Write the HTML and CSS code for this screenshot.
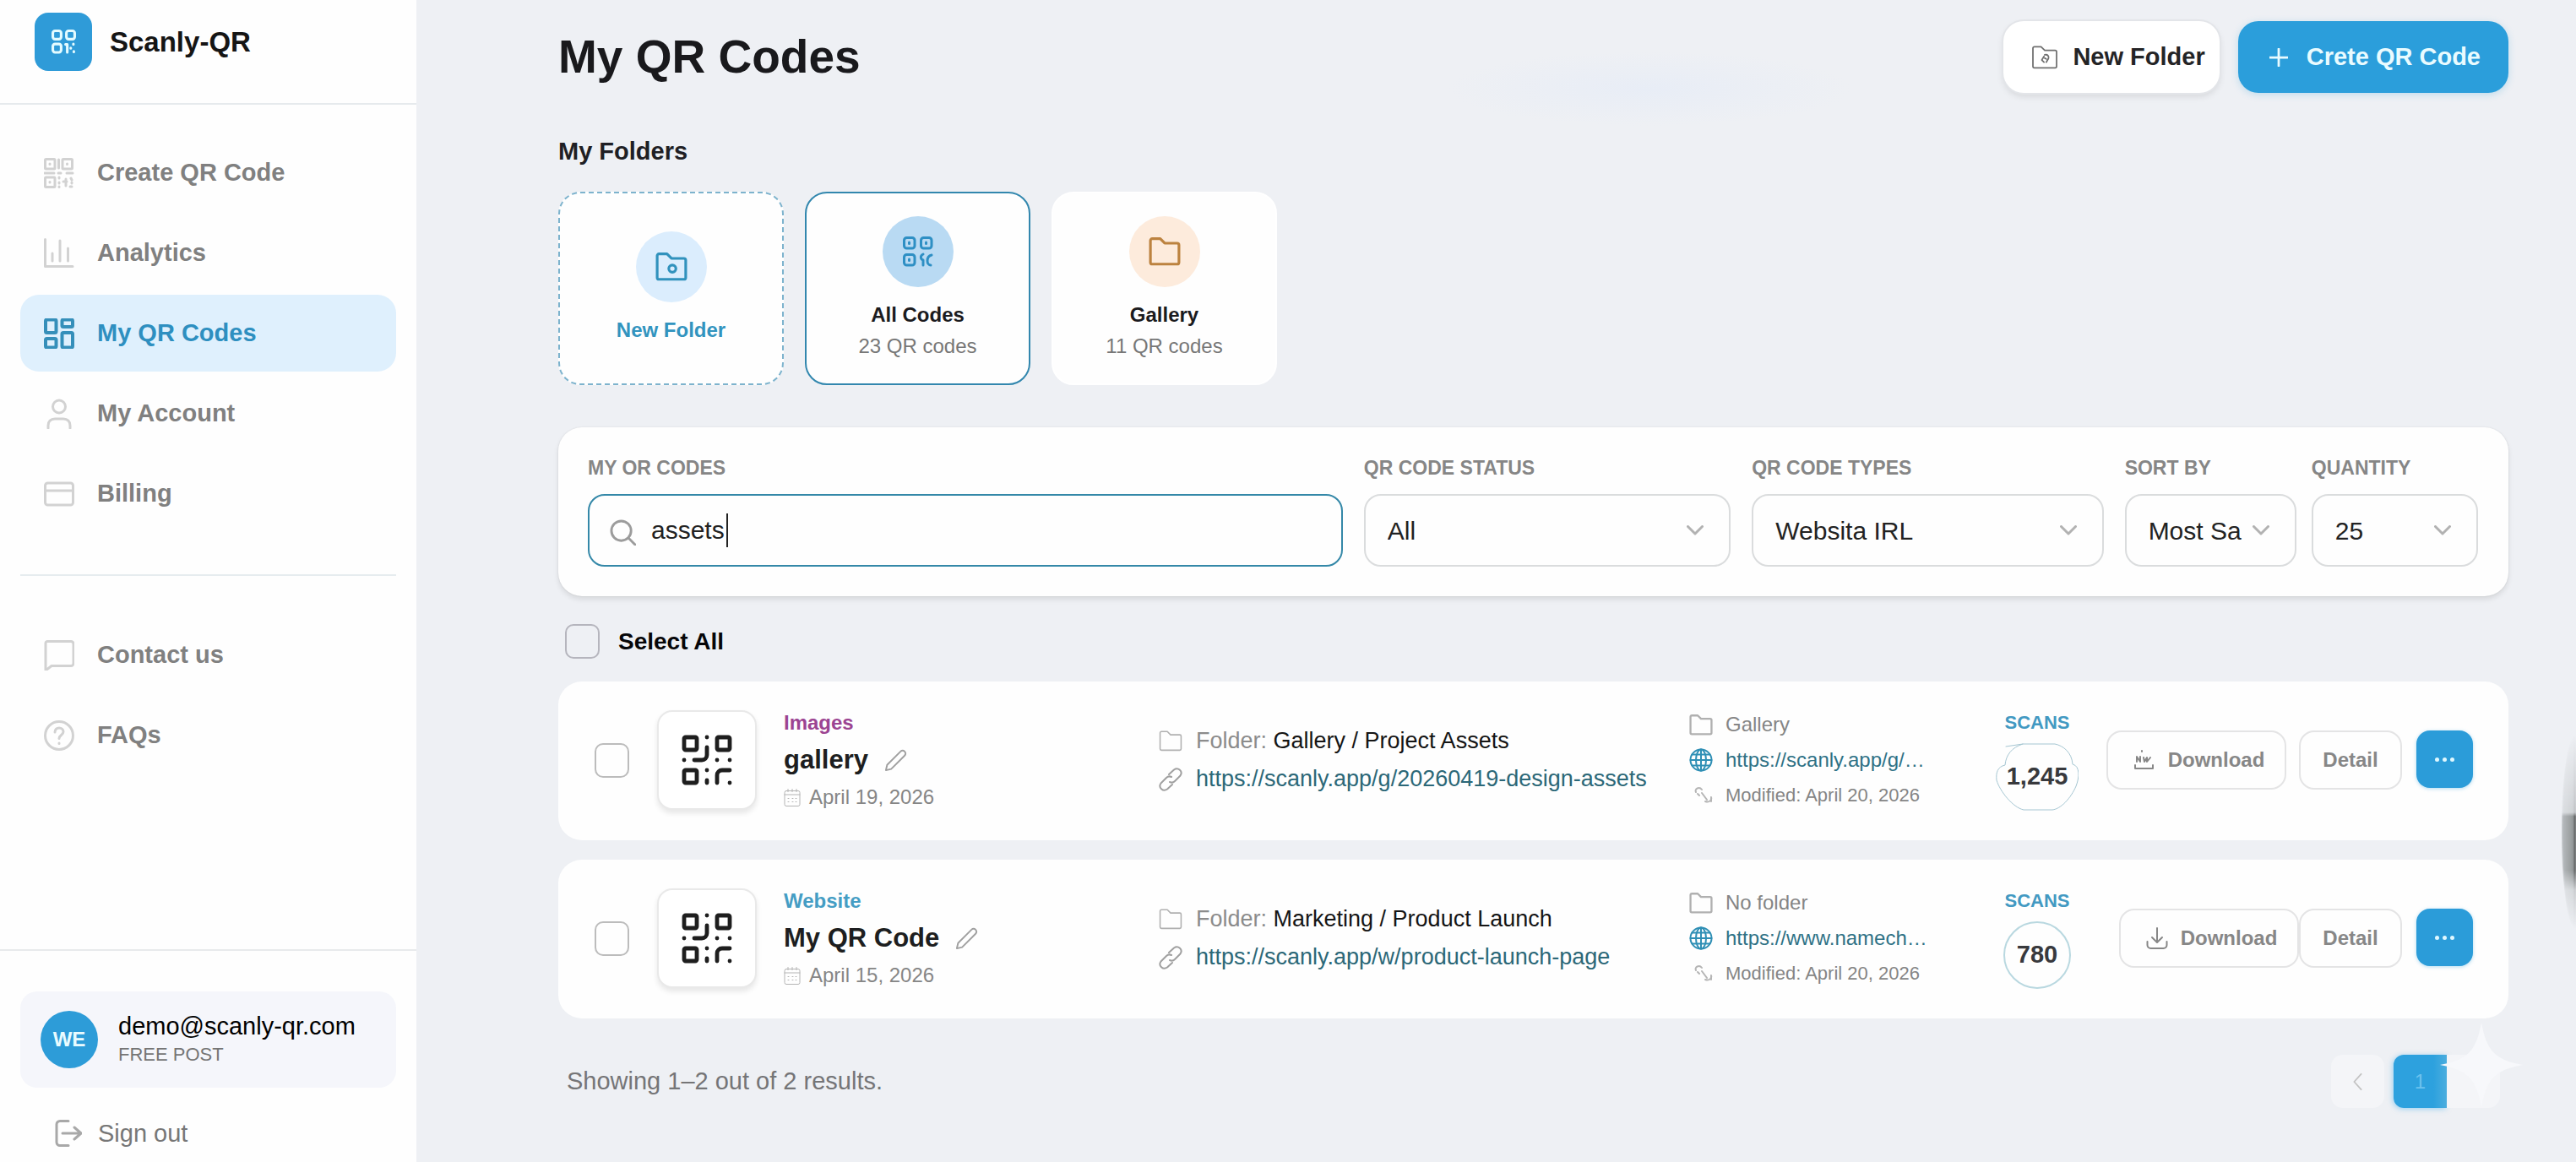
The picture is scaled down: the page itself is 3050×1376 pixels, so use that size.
FILE: index.html
```html
<!DOCTYPE html>
<html lang="en">
<head>
<meta charset="utf-8">
<meta name="viewport" content="width=device-width, initial-scale=1">
<title>My QR Codes – Scanly-QR</title>
<link rel="stylesheet" href="styles.css">
</head>
<body>
<svg class="sprite" aria-hidden="true">
  <symbol id="i-qr" viewBox="0 0 24 24"><rect x="3" y="3" width="5" height="5" rx=".6"/><rect x="16" y="3" width="5" height="5" rx=".6"/><rect x="3" y="16" width="5" height="5" rx=".6"/><path d="M21 16h-3a2 2 0 0 0-2 2v3M21 21v.01M12 7v3a2 2 0 0 1-2 2H7M3 12h.01M12 3h.01M12 16v.01M16 12h.01M21 12v.01M12 21v-1"/></symbol>
  <symbol id="i-logo" viewBox="0 0 28 28"><rect x="1.500" y="1.500" width="9.500" height="9.500" rx="2.500"/><rect x="17" y="1.500" width="9.500" height="9.500" rx="2.500"/><rect x="1.500" y="16.500" width="9.500" height="9.500" rx="2.500"/><path d="M16 17h2v9M25 16.500v.5M22 21v.5M25.500 25v.5"/></symbol>
  <symbol id="i-scan" viewBox="0 0 36 36"><rect x="1.500" y="1.500" width="11.500" height="11.500" rx="1"/><rect x="22" y="1.500" width="11.500" height="11.500" rx="1"/><rect x="1.500" y="23" width="11.500" height="11.500" rx="1"/><path d="M7 7v.5M27.500 7v.5M7 28.500v.5M17.500 2v10M1 18h11M17 18h3M27 18h7M18 23v1M18 29v1M18 34v.5M23 28h4M26 25v8M32 24l1 2M33 29v1M31 34h2"/></symbol>
  <symbol id="i-chart" viewBox="0 0 36 36"><path d="M1.500 1.500v32H34M10 18v9M19 3v24M28.500 12v15"/></symbol>
  <symbol id="i-dash" viewBox="0 0 36 36"><rect x="2" y="1.500" width="12.500" height="15.500" rx="1.500"/><rect x="21.500" y="1.500" width="12.500" height="8.500" rx="1.500"/><rect x="2" y="24" width="12.500" height="10.500" rx="1.500"/><rect x="21.500" y="17" width="12.500" height="17.500" rx="1.500"/></symbol>
  <symbol id="i-user" viewBox="0 0 36 36"><circle cx="18" cy="9.500" r="7.500"/><path d="M5 35v-3c0-5 3-8 8-8h10c5 0 8 3 8 8v3"/></symbol>
  <symbol id="i-card" viewBox="0 0 36 36"><rect x="1.500" y="5" width="33" height="26" rx="3"/><path d="M1.500 14h33"/></symbol>
  <symbol id="i-chat" viewBox="0 0 36 36"><path d="M4 1.500h28a3 3 0 0 1 3 3v23a3 3 0 0 1-3 3H9l-7 5.500V4a2.500 2.500 0 0 1 2-2.500z"/></symbol>
  <symbol id="i-help" viewBox="0 0 36 36"><circle cx="18" cy="18" r="16.500"/><path d="M13 14c0-7 10-6.500 10-.5 0 4-5 4-5 8M18 27v.5"/></symbol>
  <symbol id="i-out" viewBox="0 0 32 32"><path d="M16 1.500H6a4 4 0 0 0-4 4v21a4 4 0 0 0 4 4h10M9 16h21M23 9l8 7-8 7"/></symbol>
  <symbol id="i-folder" viewBox="0 0 36 32"><path d="M2 3.500A2 2 0 0 1 4 1.500h9l5 5h14a2 2 0 0 1 2 2V28a2 2 0 0 1-2 2H4a2 2 0 0 1-2-2z"/></symbol>
  <symbol id="i-folder-o" viewBox="0 0 36 32"><path d="M2 3.500A2 2 0 0 1 4 1.500h9l5 5h14a2 2 0 0 1 2 2V28a2 2 0 0 1-2 2H4a2 2 0 0 1-2-2z"/><circle cx="19" cy="18" r="4"/></symbol>
  <symbol id="i-folder-link" viewBox="0 0 36 32"><path d="M2 3.500A2 2 0 0 1 4 1.500h9l5 5h14a2 2 0 0 1 2 2V28a2 2 0 0 1-2 2H4a2 2 0 0 1-2-2z"/><path d="M17 22.500l-3-3 3-5M18 12.500c4-1 6 2 5 5l-3 5M18 17l2 1"/></symbol>
  <symbol id="i-all" viewBox="0 0 36 36"><rect x="1.500" y="1.500" width="12.500" height="12.500" rx="3"/><rect x="21.500" y="1.500" width="12.500" height="12.500" rx="3"/><rect x="1.500" y="21.500" width="12.500" height="12.500" rx="3"/><path d="M7.500 7v1.500M27.500 7v1.500M7.500 27v1.500M24 21c-4 2-3 6 0 7v6M34 22c-5 1-5 5-5 7 0 3 2 5 4 5"/></symbol>
  <symbol id="i-plus" viewBox="0 0 24 24"><path d="M12 1v22M1 12h22"/></symbol>
  <symbol id="i-search" viewBox="0 0 32 32"><circle cx="14" cy="14" r="12"/><path d="M23 23l8 8"/></symbol>
  <symbol id="i-down" viewBox="0 0 20 12"><path d="M1.500 1.500L10 10l8.500-8.500"/></symbol>
  <symbol id="i-pen" viewBox="0 0 28 28"><path d="M2 26l1.500-6.500L20 3c1.500-1.500 3.500-1.500 5 0s1.500 3.500 0 5L8.500 24.500z"/></symbol>
  <symbol id="i-cal" viewBox="0 0 20 22"><rect x="1" y="3" width="18" height="18" rx="2"/><path d="M1 7.500h18M5 1v3M10 1v3M15 1v3M5 12h1M10 12h1M14 12h1M5 16h1M10 16h1M14 16h1"/></symbol>
  <symbol id="i-link" viewBox="0 0 28 28"><path d="M12 8l6-5.500c5-3.500 11 2 7.500 7L19 16c-2 2-4 2-6 1M16 20l-6 5.500c-5 3.500-11-2-7.500-7L9 12c2-2 4-2 6-1"/></symbol>
  <symbol id="i-globe" viewBox="0 0 28 28"><circle cx="14" cy="14" r="12.500"/><ellipse cx="14" cy="14" rx="6" ry="12.500"/><path d="M14 1.500v25M1.500 14h25M3.500 7.500h21M3.500 20.500h21"/></symbol>
  <symbol id="i-mod" viewBox="0 0 22 22"><path d="M2 7c-2-4 4-7 7-3M4 9l2 2M9 8l6 8M20 13c1 3-2 7-7 5M20 18v-4"/></symbol>
  <symbol id="i-save" viewBox="0 0 26 26"><path d="M13 1v16M7 12l6 6 6-6M1.500 17v4a4 4 0 0 0 4 4h15a4 4 0 0 0 4-4v-4"/></symbol>
  <symbol id="i-save-alt" viewBox="0 0 26 26"><path d="M4 15V9l4 6V9M10 2v1M12 10l1 5 3-5v5l4-5M2 19v4h21v-4"/></symbol>
  <symbol id="i-prev" viewBox="0 0 12 22"><path d="M10.500 1L1.500 11l9 10"/></symbol>
</svg>

<div class="app">
  <aside class="sidebar">
    <div class="brand">
      <span class="brand-mark"><svg class="icon-28"><use href="#i-logo"/></svg></span>
      <span class="brand-name">Scanly-QR</span>
    </div>
    <nav class="nav">
      <a class="nav-item" href="#create"><svg><use href="#i-scan"/></svg>Create QR Code</a>
      <a class="nav-item" href="#analytics"><svg><use href="#i-chart"/></svg>Analytics</a>
      <a class="nav-item is-active" href="#codes" aria-current="page"><svg><use href="#i-dash"/></svg>My QR Codes</a>
      <a class="nav-item" href="#account"><svg><use href="#i-user"/></svg>My Account</a>
      <a class="nav-item" href="#billing"><svg><use href="#i-card"/></svg>Billing</a>
      <hr class="nav-rule">
      <a class="nav-item" href="#contact"><svg><use href="#i-chat"/></svg>Contact us</a>
      <a class="nav-item" href="#faqs"><svg><use href="#i-help"/></svg>FAQs</a>
    </nav>
    <div class="side-foot">
      <div class="user">
        <span class="avatar">WE</span>
        <div><div class="user-mail">demo@scanly-qr.com</div><div class="user-plan">FREE POST</div></div>
      </div>
      <a class="sign-out" href="#signout"><svg><use href="#i-out"/></svg>Sign out</a>
    </div>
  </aside>

  <main class="main">
    <header class="page-head">
      <h1>My QR Codes</h1>
      <div class="head-actions">
        <button class="btn btn-plain" type="button"><svg><use href="#i-folder-link"/></svg>New Folder</button>
        <button class="btn btn-primary" type="button"><svg><use href="#i-plus"/></svg>Crete QR Code</button>
      </div>
    </header>

    <section>
      <h2>My Folders</h2>
      <div class="folders">
        <button class="folder folder-new" type="button"><span class="disc"><svg><use href="#i-folder-o"/></svg></span><span class="folder-name">New Folder</span></button>
        <button class="folder folder-current" type="button"><span class="disc disc-blue"><svg><use href="#i-all"/></svg></span><span class="folder-name">All Codes</span><span class="folder-count">23 QR codes</span></button>
        <button class="folder" type="button"><span class="disc disc-orange"><svg><use href="#i-folder"/></svg></span><span class="folder-name">Gallery</span><span class="folder-count">11 QR codes</span></button>
      </div>
    </section>

    <form class="filters">
      <div class="field">
        <label for="q">MY OR CODES</label>
        <div class="control control-search"><svg><use href="#i-search"/></svg><input id="q" type="text" value="assets"><span class="caret"></span></div>
      </div>
      <div class="field">
        <label for="status">QR CODE STATUS</label>
        <div class="control"><select id="status"><option>All</option></select><svg><use href="#i-down"/></svg></div>
      </div>
      <div class="field">
        <label for="types">QR CODE TYPES</label>
        <div class="control"><select id="types"><option>Websita IRL</option></select><svg><use href="#i-down"/></svg></div>
      </div>
      <div class="field field-sort">
        <label for="sort">SORT BY</label>
        <div class="control"><select id="sort"><option>Most Sa</option></select><svg><use href="#i-down"/></svg></div>
      </div>
      <div class="field">
        <label for="qty">QUANTITY</label>
        <div class="control"><select id="qty"><option>25</option></select><svg><use href="#i-down"/></svg></div>
      </div>
    </form>

    <div class="select-all"><input class="check" type="checkbox" id="all"><label for="all">Select All</label></div>

    <div class="codes">
      <article class="code">
        <input class="check" type="checkbox" aria-label="Select gallery">
        <div class="thumb"><svg><use href="#i-qr"/></svg></div>
        <div class="info">
          <div class="kind kind-images">Images</div>
          <div class="name">gallery <svg><use href="#i-pen"/></svg></div>
          <div class="date"><svg><use href="#i-cal"/></svg>April 19, 2026</div>
        </div>
        <div class="place">
          <div><svg class="ic-folder"><use href="#i-folder"/></svg><span>Folder: <b>Gallery / Project Assets</b></span></div>
          <div><svg><use href="#i-link"/></svg><a href="#g">https://scanly.app/g/20260419-design-assets</a></div>
        </div>
        <div class="meta">
          <div><svg class="ic-folder"><use href="#i-folder"/></svg>Gallery</div>
          <div><svg class="ic-globe"><use href="#i-globe"/></svg><a href="#g">https://scanly.app/g/…</a></div>
          <div class="modified"><svg class="ic-mod"><use href="#i-mod"/></svg>Modified: April 20, 2026</div>
        </div>
        <div class="scans">
          <div class="scans-label">SCANS</div>
          <div class="count count-wide"><svg viewBox="0 0 98 80"><path d="M12 4l20-3h38c10 2 20 10 21 24 9 2 8 16 4 26-6 14-18 27-28 28H33C20 76 5 57 1 44c-1-9 1-16 10-18 1-12 8-21 21-25"/></svg><span>1,245</span></div>
        </div>
        <div class="actions">
          <div class="pair">
            <button class="small-btn" type="button"><svg><use href="#i-save-alt"/></svg>Download</button>
            <button class="small-btn small-btn-text" type="button">Detail</button>
          </div>
          <button class="more" type="button" aria-label="More"><i></i><i></i><i></i></button>
        </div>
      </article>

      <article class="code">
        <input class="check" type="checkbox" aria-label="Select My QR Code">
        <div class="thumb"><svg><use href="#i-qr"/></svg></div>
        <div class="info">
          <div class="kind kind-website">Website</div>
          <div class="name">My QR Code <svg><use href="#i-pen"/></svg></div>
          <div class="date"><svg><use href="#i-cal"/></svg>April 15, 2026</div>
        </div>
        <div class="place">
          <div><svg class="ic-folder"><use href="#i-folder"/></svg><span>Folder: <b>Marketing / Product Launch</b></span></div>
          <div><svg><use href="#i-link"/></svg><a href="#w">https://scanly.app/w/product-launch-page</a></div>
        </div>
        <div class="meta">
          <div><svg class="ic-folder"><use href="#i-folder"/></svg>No folder</div>
          <div><svg class="ic-globe"><use href="#i-globe"/></svg><a href="#w">https://www.namech…</a></div>
          <div class="modified"><svg class="ic-mod"><use href="#i-mod"/></svg>Modified: April 20, 2026</div>
        </div>
        <div class="scans">
          <div class="scans-label">SCANS</div>
          <div class="count"><span>780</span></div>
        </div>
        <div class="actions">
          <div class="pair pair-joined">
            <button class="small-btn" type="button"><svg><use href="#i-save"/></svg>Download</button>
            <button class="small-btn small-btn-text" type="button">Detail</button>
          </div>
          <button class="more" type="button" aria-label="More"><i></i><i></i><i></i></button>
        </div>
      </article>
    </div>

    <footer class="results">
      <p>Showing 1–2 out of 2 results.</p>
      <div class="pager">
        <button class="page page-prev" type="button" aria-label="Previous"><svg><use href="#i-prev"/></svg></button>
        <button class="page page-current" type="button">1</button>
        <button class="page page-next" type="button" aria-label="Next"></button>
        <svg class="sparkle" viewBox="0 0 98 100"><path d="M49 0c6 32 15 44 49 50-34 6-43 18-49 50-6-32-15-44-49-50 34-6 43-18 49-50z"/></svg>
      </div>
    </footer>
    <div class="edge-handle"></div>
  </main>
</div>
</body>
</html>
```
FILE: styles.css
```css
* { box-sizing: border-box; }

body {
  margin: 0;
  font-family: "Liberation Sans", Arial, sans-serif;
  font-size: 24px;
  color: #1b1b1e;
  background: #eef0f4;
}

button, input, select { font: inherit; color: inherit; margin: 0; }
button { cursor: pointer; border: 0; }
a { color: inherit; text-decoration: none; }
svg { fill: none; stroke: currentColor; stroke-width: 3; stroke-linecap: round; stroke-linejoin: round; flex: none; display: block; }
.sprite { display: none; }

.app { display: grid; grid-template-columns: 493px minmax(0, 1fr); min-height: 100vh; }

/* Sidebar */
.sidebar { display: flex; flex-direction: column; background: #fefefe; }
.brand { display: flex; align-items: center; gap: 21px; padding: 15px 41px 38px; border-bottom: 2px solid #e6eaed; }
.brand-mark { display: grid; place-items: center; width: 68px; height: 69px; border-radius: 16px; background: #2f9bd8; color: #e4fbff; }
.icon-28 { width: 29px; height: 29px; }
.brand-name { font-size: 33px; font-weight: bold; color: #151515; }

.nav { display: flex; flex-direction: column; gap: 4px; padding: 35px 24px 20px; }
.nav-item { display: flex; align-items: center; gap: 27px; height: 91px; padding: 0 28px; border-radius: 22px; font-size: 29px; font-weight: bold; color: #808080; }
.nav-item svg { width: 36px; height: 36px; color: #d2d2d2; }
.nav-item.is-active { background: #dff0fd; color: #2e8fc0; }
.nav-item.is-active svg { color: #358fba; stroke-width: 4; }
.nav-rule { width: 100%; margin: 46px 0 44px; border: 0; border-top: 2px solid #e6ecef; }

.side-foot { margin-top: auto; padding: 48px 24px 4px; border-top: 2px solid #e8eaec; }
.user { display: flex; align-items: center; gap: 24px; height: 114px; padding: 0 24px; border-radius: 20px; background: #f5f6fb; }
.avatar { display: grid; place-items: center; width: 68px; height: 68px; border-radius: 50%; background: #2d9cd8; color: #e9fbff; font-weight: bold; }
.user-mail { font-size: 29px; line-height: 36px; color: #000; }
.user-plan { font-size: 22px; line-height: 32px; color: #757575; }
.sign-out { display: flex; align-items: center; gap: 19px; height: 60px; margin-top: 24px; padding-left: 41px; font-size: 29px; color: #777; }
.sign-out svg { width: 32px; height: 32px; color: #a8a8a8; }

/* Main column */
.main { position: relative; padding: 25px 80px 40px 168px; background: radial-gradient(ellipse 240px 44px at 1460px 105px, #e8edf6, transparent) #eef0f4; }
.page-head { display: flex; align-items: center; justify-content: space-between; }
h1 { margin: 0; font-size: 55px; line-height: 85px; color: #19191c; }
h2 { margin: 51px 0 30px; font-size: 29px; line-height: 36px; color: #1f1f24; }
.head-actions { display: flex; gap: 22px; }
.btn { display: flex; align-items: center; height: 85px; border-radius: 24px; font-size: 29px; font-weight: bold; }
.btn-plain { gap: 17px; padding: 0 17px 0 33px; background: #fff; color: #242426; box-shadow: 0 0 0 2px #e3e5e9, 0 4px 8px #0000001c; }
.btn-plain svg { width: 32px; height: 28px; stroke-width: 2; color: #6f6f6f; }
.btn-primary { gap: 22px; padding: 0 33px 0 37px; background: #2b9edb; color: #e9fbff; box-shadow: 0 2px 8px #2b9edb40; }
.btn-primary svg { width: 22px; height: 22px; }

.folders { display: flex; gap: 25px; }
.folder { display: flex; flex-direction: column; align-items: center; justify-content: center; width: 267px; height: 229px; padding: 0; border: 2px solid #fff; border-radius: 26px; background: #fefefe; }
.folder-new { border: 2px dashed #7db3cd; color: #3294bf; }
.folder-current { border-color: #3287ae; }
.disc { display: grid; place-items: center; width: 84px; height: 84px; margin-bottom: 14px; border-radius: 50%; background: #dbedfd; color: #3192bd; }
.disc svg { width: 38px; height: 34px; }
.disc-blue { background: #b9daf3; color: #2e8fc4; }
.disc-blue svg { width: 36px; height: 36px; }
.disc-orange { background: #fdebdc; color: #bc823f; }
.folder-name { font-weight: bold; line-height: 37px; }
.folder-count { line-height: 37px; color: #777; }

/* Filters */
.filters { display: grid; grid-template-columns: 893fr 434fr 416fr 196fr 197fr; gap: 25px; margin-top: 50px; padding: 33px 36px 35px 35px; border-radius: 28px; background: #fefefe; box-shadow: 0 0 2px #0000001a, 0 4px 6px #00000018; }
.field { min-width: 0; }
.field-sort { margin-right: -7px; }
.field label { display: block; margin-bottom: 16px; font-size: 23px; line-height: 30px; font-weight: bold; color: #868686; white-space: nowrap; }
.control { display: grid; grid-template-columns: minmax(0, 1fr) auto; align-items: center; height: 86px; border: 2px solid #dadcdd; border-radius: 20px; font-size: 30px; color: #222; }
.control select { grid-area: 1 / 1 / 2 / 3; width: 100%; height: 82px; padding: 0 26px; border: 0; background: none; appearance: none; outline: 0; }
.control > svg { grid-area: 1 / 2; width: 20px; height: 12px; margin-right: 30px; color: #b2b2b2; pointer-events: none; }
.control-search { display: flex; border-color: #3488a8; }
.control-search > svg { width: 31px; height: 31px; margin: 4px 18px 0 24px; color: #9c9c9c; }
.control-search input { width: 89px; height: 60px; padding: 0; border: 0; outline: 0; background: none; }
.caret { width: 2px; height: 40px; background: #222; }

.check { appearance: none; display: block; width: 41px; height: 41px; border: 2px solid #bcbcbc; border-radius: 10px; background: transparent; }
.select-all { display: flex; align-items: center; gap: 22px; margin: 33px 0 27px; padding-left: 8px; font-size: 28px; font-weight: bold; color: #060608; }
.select-all .check { border-color: #b5b5bd; }

/* Code rows */
.codes { display: grid; gap: 23px; }
.code { display: grid; grid-template-columns: 74px 150px 444fr 628fr 350fr 124px 454px; align-items: center; height: 188px; padding: 0 42px 2px 43px; border-radius: 28px; background: #fefefe; }
.thumb { display: grid; place-items: center; width: 118px; height: 118px; border-radius: 18px; border: 2px solid #e9e9e9; background: #fff; box-shadow: 0 4px 6px #00000018; color: #1e1e1e; }
.thumb svg { width: 72px; height: 72px; stroke-width: 1.6; }
.info > div, .place > div, .meta > div { display: flex; align-items: center; white-space: nowrap; }
.info > div { line-height: 44px; }
.kind { font-weight: bold; }
.kind-images { color: #9c4492; }
.kind-website { color: #459dc4; }
.name { gap: 19px; font-size: 31px; font-weight: bold; color: #1d1e20; }
.name svg { width: 27px; height: 27px; stroke-width: 2; color: #a0a0a0; }
.date { gap: 10px; color: #868686; }
.date svg { width: 20px; height: 23px; stroke-width: 1; color: #b4b4b4; }
.place > div { gap: 16px; font-size: 27px; line-height: 45px; color: #8c8c8c; }
.place b { font-weight: normal; color: #151515; }
.place a { color: #2c6878; }
.place svg { width: 28px; height: 28px; stroke-width: 2; color: #a0a0a0; }
.meta > div { gap: 15px; line-height: 42px; color: #858585; }
.meta a { color: #2f7286; }
.place .ic-folder, .meta .ic-folder { width: 28px; height: 25px; color: #b0b0b0; }
.meta .ic-globe { width: 28px; height: 28px; stroke-width: 2; color: #2f8fb5; }
.meta .ic-mod { width: 22px; height: 22px; margin-left: 6px; stroke-width: 2; color: #b5b5b5; }
.meta .modified { font-size: 22px; }

.scans { display: grid; justify-items: center; gap: 9px; }
.scans-label { font-size: 22px; line-height: 30px; font-weight: bold; color: #4299c2; }
.count { display: grid; place-items: center; width: 80px; height: 80px; border: 2px solid #b9d8e0; border-radius: 50%; font-size: 29px; font-weight: bold; color: #38393d; }
.count-wide { width: 98px; border: 0; }
.count-wide > * { grid-area: 1 / 1; }
.count-wide svg { width: 98px; height: 80px; stroke-width: 1; color: #a5c6d2; }

.actions, .pair { display: flex; }
.actions { justify-content: flex-end; gap: 17px; }
.pair { gap: 15px; }
.pair-joined { gap: 0; }
.small-btn { display: flex; align-items: center; justify-content: center; gap: 15px; width: 213px; height: 70px; padding: 0 0 0 6px; border: 2px solid #e4e4e5; border-radius: 18px; background: #fefefe; font-weight: bold; color: #878787; }
.small-btn svg { width: 26px; height: 26px; stroke-width: 2; }
.small-btn-text { width: 122px; padding: 0; }
.more { display: flex; align-items: center; justify-content: center; gap: 4px; width: 67px; height: 68px; padding: 0; border-radius: 16px; background: #2b9cd9; box-shadow: 0 1px 4px #2b9cd960; }
.more i { width: 5px; height: 5px; border-radius: 50%; background: #dff8ff; }

/* Footer */
.results { display: flex; align-items: center; justify-content: space-between; margin-top: 43px; padding: 0 10px; }
.results p { margin: 0; font-size: 29px; color: #757577; }
.pager { position: relative; display: flex; }
.page { display: grid; place-items: center; width: 63px; height: 63px; padding: 0; border-radius: 14px; background: #f4f5f8; }
.page-prev { margin-right: 11px; }
.page-prev svg { width: 11px; height: 22px; stroke-width: 2; color: #c3c3c3; }
.page-current { border-radius: 12px 0 0 12px; background: linear-gradient(90deg, #2da1de 75%, #4badde); color: #6cc2ee; box-shadow: -1px 1px 6px #3fb0f080; }
.page-next { border-radius: 0 14px 14px 0; }
.sparkle { position: absolute; right: -27px; top: -38px; width: 98px; height: 100px; fill: #f7f8fb; stroke: none; }

/* Pull tab on the window's edge */
.edge-handle { position: absolute; right: 0; top: 870px; width: 17px; height: 230px; background: linear-gradient(90deg, transparent 88%, #222 94%), linear-gradient(90deg, #b9bdc0, #8b8f8f); border-radius: 17px 0 0 17px / 110px 0 0 110px; filter: blur(1px); mask-image: linear-gradient(transparent, #0005 40%, #000 42%, #000 70%, #0004 80%, transparent); }
```
